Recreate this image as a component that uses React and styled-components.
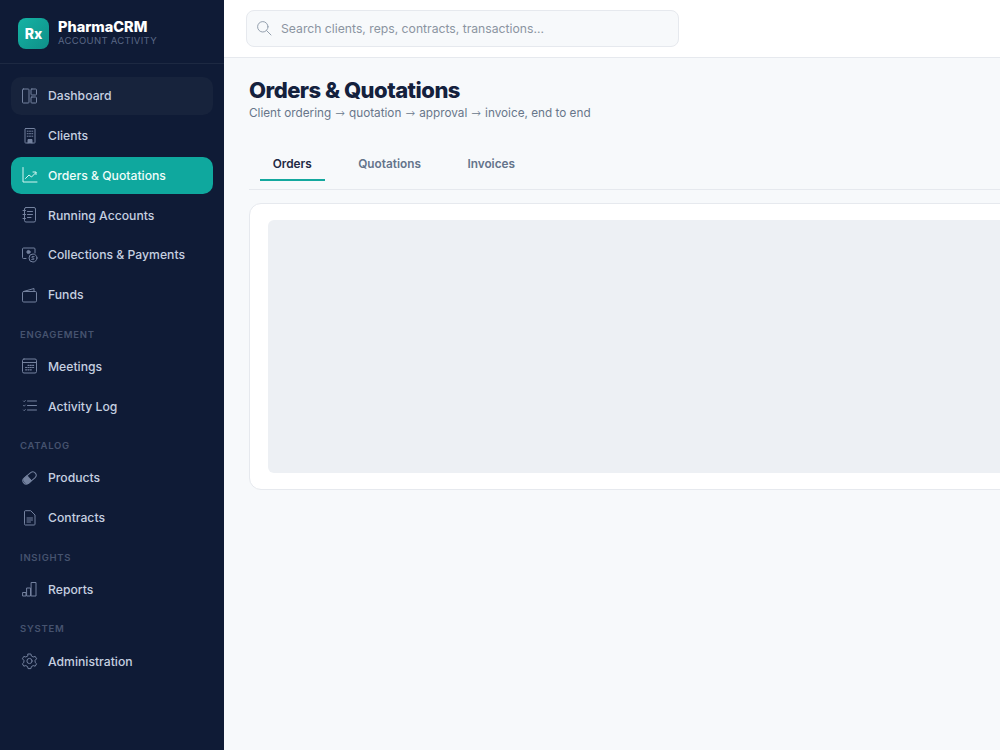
import React from 'react';
import styled, { createGlobalStyle } from 'styled-components';

const GlobalStyle = createGlobalStyle`
  html, body {
    margin: 0;
    padding: 0;
    height: 100%;
    overflow: hidden;
    background: #f7f9fb;
    font-family: 'Inter', 'Liberation Sans', sans-serif;
  }
`;

const Shell = styled.div`
  display: flex;
  width: 1000px;
  height: 750px;
  overflow: hidden;
`;

const Sidebar = styled.aside`
  flex: 0 0 224px;
  display: flex;
  flex-direction: column;
  background: #0f1b36;
`;

const Brand = styled.div`
  display: flex;
  align-items: center;
  gap: 9px;
  height: 64px;
  padding: 3px 18px 0;
  box-sizing: border-box;
  border-bottom: 1px solid #1d2942;
`;

const Logo = styled.div`
  width: 31px;
  height: 31px;
  border-radius: 8px;
  display: flex;
  align-items: center;
  justify-content: center;
  background: linear-gradient(135deg, #14b3a4, #0f8f88);
  color: #fff;
  font-size: 14px;
  font-weight: 800;
`;

const BrandText = styled.div`
  display: flex;
  flex-direction: column;
`;

const BrandName = styled.div`
  color: #fff;
  font-size: 14.5px;
  font-weight: 800;
  line-height: 16px;
`;

const BrandSub = styled.div`
  color: #5a6785;
  font-size: 9.5px;
  letter-spacing: 0.3px;
  line-height: 12px;
`;

const Nav = styled.nav`
  display: flex;
  flex-direction: column;
  gap: 2px;
  padding: 13px 11px 0;
`;

const NavItem = styled.a`
  display: flex;
  align-items: center;
  gap: 10px;
  height: 37.75px;
  padding: 0 9px;
  border-radius: 10px;
  color: ${(p) => (p.$active ? '#f0fdfa' : '#c6d0e0')};
  background: ${(p) => (p.$active ? '#0fa89e' : p.$soft ? '#17233c' : 'transparent')};
  font-size: 12.2px;
  font-weight: 550;
  text-decoration: none;

  svg {
    flex: 0 0 18px;
    color: ${(p) => (p.$active ? '#d5f5f0' : '#74829f')};
  }
`;

const SectionLabel = styled.div`
  height: 16px;
  margin: 11px 0 3px;
  padding-left: 9px;
  color: #46536f;
  font-size: 9.5px;
  font-weight: 600;
  line-height: 16px;
  letter-spacing: 0.75px;
`;

const Main = styled.main`
  flex: 1;
  min-width: 0;
  display: flex;
  flex-direction: column;
`;

const Topbar = styled.header`
  flex: 0 0 58px;
  box-sizing: border-box;
  display: flex;
  align-items: center;
  padding: 0 22px 1px;
  background: #fff;
  border-bottom: 1px solid #e6e9ee;
`;

const Search = styled.div`
  display: flex;
  align-items: center;
  gap: 8px;
  width: 433px;
  height: 37px;
  box-sizing: border-box;
  padding: 0 8px;
  background: #f7f9fb;
  border: 1px solid #e6e9ee;
  border-radius: 8px;
  color: #8b94a1;
  font-size: 12.2px;
  svg {
    color: #94a0ae;
  }
`;

const Content = styled.div`
  padding: 20px 0 0 25px;
`;

const Title = styled.h1`
  margin: 0;
  color: #14213d;
  font-size: 22px;
  font-weight: 800;
  line-height: 24px;
  letter-spacing: -0.5px;
  white-space: nowrap;
`;

const Subtitle = styled.p`
  margin: 3px 0 0;
  color: #68768a;
  font-size: 11.75px;
  line-height: 16px;
`;

const Arrow = styled.span`
  margin: 0 0.8px;
  font-family: 'DejaVu Sans', sans-serif;
  font-size: 11.5px;
  font-weight: 300;
`;

const Tabs = styled.div`
  display: flex;
  align-items: flex-start;
  gap: 21px;
  height: 42px;
  margin-top: 26px;
  padding-left: 11px;
  border-bottom: 1.5px solid #e6e9ee;
`;

const Tab = styled.div`
  height: 34px;
  box-sizing: border-box;
  padding: 2px 12.75px 0;
  display: flex;
  align-items: center;
  color: ${(p) => (p.$active ? '#1f2a44' : '#64748b')};
  border-bottom: 2px solid ${(p) => (p.$active ? '#14a89e' : 'transparent')};
  font-size: 11.8px;
  font-weight: 600;
`;

const Card = styled.section`
  width: 1000px;
  margin-top: 12.5px;
  box-sizing: border-box;
  padding: 16px 18px;
  background: #fff;
  border: 1px solid #e6e9ee;
  border-radius: 12px;
`;

const Skeleton = styled.div`
  height: 253px;
  background: #edf0f4;
  border-radius: 6px;
`;

const Icon = ({ children }) => (
  <svg width="18" height="18" viewBox="0 0 18 18" fill="none" stroke="currentColor" strokeWidth="1" strokeLinecap="round" strokeLinejoin="round">
    {children}
  </svg>
);

const icons = {
  dashboard: (
    <>
      <rect x="2.5" y="2" width="6.5" height="14" rx="0.8" />
      <rect x="11" y="2" width="5.5" height="6" rx="0.8" />
      <rect x="11" y="10" width="5.5" height="6" rx="0.8" />
    </>
  ),
  clients: (
    <>
      <rect x="5" y="1.5" width="10" height="14.5" rx="0.6" />
      <path d="M7.2 4.2h1M9.5 4.2h1M11.8 4.2h1M7.2 6.7h1M9.5 6.7h1M11.8 6.7h1M7.2 9.2h1M9.5 9.2h1M11.8 9.2h1" />
      <path d="M8 16v-3.5h4V16" fill="currentColor" />
    </>
  ),
  orders: (
    <>
      <path d="M3 1.5V16h14" />
      <path d="M5.5 12.5l3.5-3.5 2.5 2 4.5-4.5" />
      <path d="M13 6h3v2.5" />
    </>
  ),
  running: (
    <>
      <rect x="4.5" y="1.5" width="11" height="14.5" rx="1.5" />
      <path d="M7.5 5.5h5M7.5 8.5h5M7.5 11.5h3.5" />
      <path d="M3 4.5h2.5M3 8.5h2.5M3 12.5h2.5" />
    </>
  ),
  collections: (
    <>
      <path d="M6 12.5H3.5a1 1 0 0 1-1-1V3a1 1 0 0 1 1-1h10.5a1 1 0 0 1 1 1v4" />
      <circle cx="8.5" cy="6" r="1.6" fill="currentColor" />
      <circle cx="13" cy="12" r="4" />
      <path d="M14.2 10.5h-2.2v1.5h1.8v1.5h-2.2" strokeWidth="0.8" />
    </>
  ),
  funds: (
    <>
      <rect x="2.5" y="5.5" width="14" height="10.5" rx="1.2" />
      <path d="M3.5 5.5 14 2.5v3" />
    </>
  ),
  meetings: (
    <>
      <rect x="2.5" y="2" width="14" height="14" rx="1.5" />
      <path d="M2.5 5.5h14" />
      <path d="M8 8.3h1M10.3 8.3h1M12.6 8.3h1M5.6 10.5h1M8 10.5h1M10.3 10.5h1M12.6 10.5h1M5.6 12.8h1M8 12.8h1M10.3 12.8h1" strokeWidth="1.2" />
    </>
  ),
  activity: (
    <>
      <path d="M7.5 4h9M7.5 8.5h9M7.5 13h9" />
      <path d="M3.5 4l.7.7L5.3 3.5M3.5 8.5l.7.7 1.1-1.2M3.5 13l.7.7 1.1-1.2" strokeWidth="0.9" />
    </>
  ),
  products: (
    <>
      <rect x="1.9" y="5.7" width="15.2" height="6.6" rx="3.3" transform="rotate(-40 9.5 9)" />
      <path d="M7.2 6.8l4.4 4.9-2.2 2.1a3.3 3.3 0 0 1-4.6-.3l-.2-.2a3.3 3.3 0 0 1 .2-4.6z" fill="currentColor" />
    </>
  ),
  contracts: (
    <>
      <path d="M4.5 2.5a.8.8 0 0 1 .8-.8h5.4L15 6v9.2a.8.8 0 0 1-.8.8H5.3a.8.8 0 0 1-.8-.8z" />
      <path d="M7 9h5.5M7 11h5.5M7 13h3.5" />
    </>
  ),
  reports: (
    <>
      <rect x="3" y="12.5" width="3" height="3.5" />
      <rect x="7" y="8" width="3.5" height="8" />
      <rect x="11.5" y="2.5" width="4.5" height="13.5" />
    </>
  ),
  admin: (
    <>
      <path d="M8.1 2h2.8l.5 2 1.8 1 2-.6 1.4 2.4-1.5 1.5v2.1l1.5 1.4-1.4 2.4-2-.6-1.8 1-.5 2H8.1l-.5-2-1.8-1-2 .6-1.4-2.4 1.5-1.4V8.3L2.4 6.8l1.4-2.4 2 .6 1.8-1z" />
      <circle cx="9.5" cy="9" r="2.6" />
    </>
  ),
};

const sections = [
  {
    items: [
      { label: 'Dashboard', icon: 'dashboard', soft: true },
      { label: 'Clients', icon: 'clients' },
      { label: 'Orders & Quotations', icon: 'orders', active: true },
      { label: 'Running Accounts', icon: 'running' },
      { label: 'Collections & Payments', icon: 'collections' },
      { label: 'Funds', icon: 'funds' },
    ],
  },
  {
    title: 'ENGAGEMENT',
    items: [
      { label: 'Meetings', icon: 'meetings' },
      { label: 'Activity Log', icon: 'activity' },
    ],
  },
  {
    title: 'CATALOG',
    items: [
      { label: 'Products', icon: 'products' },
      { label: 'Contracts', icon: 'contracts' },
    ],
  },
  { title: 'INSIGHTS', items: [{ label: 'Reports', icon: 'reports' }] },
  { title: 'SYSTEM', items: [{ label: 'Administration', icon: 'admin' }] },
];

const App = () => (
  <Shell>
    <GlobalStyle />
    <Sidebar>
      <Brand>
        <Logo>Rx</Logo>
        <BrandText>
          <BrandName>PharmaCRM</BrandName>
          <BrandSub>ACCOUNT ACTIVITY</BrandSub>
        </BrandText>
      </Brand>
      <Nav>
        {sections.map((section, i) => (
          <React.Fragment key={i}>
            {section.title && <SectionLabel>{section.title}</SectionLabel>}
            {section.items.map((item) => (
              <NavItem key={item.label} $active={item.active} $soft={item.soft}>
                <Icon>{icons[item.icon]}</Icon>
                {item.label}
              </NavItem>
            ))}
          </React.Fragment>
        ))}
      </Nav>
    </Sidebar>
    <Main>
      <Topbar>
        <Search>
          <Icon>
            <circle cx="7.8" cy="7.8" r="5.2" />
            <path d="M11.6 11.6 16 16" />
          </Icon>
          Search clients, reps, contracts, transactions...
        </Search>
      </Topbar>
      <Content>
        <Title>Orders &amp; Quotations</Title>
        <Subtitle>
          Client ordering <Arrow>→</Arrow> quotation <Arrow>→</Arrow> approval <Arrow>→</Arrow> invoice, end to end
        </Subtitle>
        <Tabs>
          <Tab $active>Orders</Tab>
          <Tab>Quotations</Tab>
          <Tab>Invoices</Tab>
        </Tabs>
        <Card>
          <Skeleton />
        </Card>
      </Content>
    </Main>
  </Shell>
);

export default App;
